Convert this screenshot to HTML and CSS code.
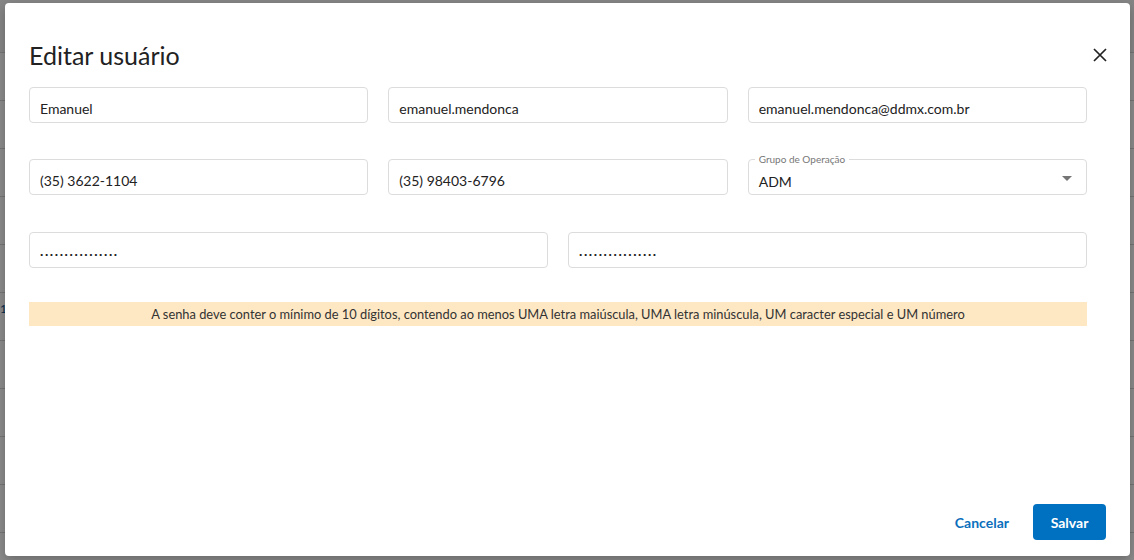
FILE: index.html
```html
<!DOCTYPE html>
<html lang="pt-BR">
<head>
  <meta charset="UTF-8">
  <title>Editar usuário</title>
  <link rel="stylesheet" href="styles.css">
</head>
<body>

  <!-- Página por trás do modal -->
  <div class="page">
    <div class="page-top"></div>
    <div class="row"></div>
    <div class="row"></div>
    <div class="row"></div>
    <div class="row"></div>
    <div class="row"></div>
    <div class="row"><span class="cell-link">1</span></div>
    <div class="row"></div>
    <div class="row"></div>
    <div class="row"></div>
    <div class="row"></div>
    <div class="row"></div>
  </div>

  <div class="overlay"></div>

  <!-- Modal -->
  <div class="modal">
    <div class="modal-header">
      <h2 class="modal-title">Editar usuário</h2>
      <button class="close-button" aria-label="Fechar">
        <svg width="14" height="14" viewBox="0 0 14 14">
          <path d="M1 1 L13 13 M13 1 L1 13" stroke="#222" stroke-width="1.7" fill="none"/>
        </svg>
      </button>
    </div>

    <div class="form">
      <div class="grid grid-3 first">
        <input class="field" type="text" value="Emanuel">
        <input class="field" type="text" value="emanuel.mendonca">
        <input class="field" type="text" value="emanuel.mendonca@ddmx.com.br">
      </div>

      <div class="grid grid-3">
        <input class="field" type="text" value="(35) 3622-1104">
        <input class="field" type="text" value="(35) 98403-6796">
        <div class="select-box">
          <span class="select-label">Grupo de Operação</span>
          <span class="select-value">ADM</span>
          <span class="select-arrow"></span>
        </div>
      </div>

      <div class="grid grid-2">
        <input class="field field-pass" type="text" value="................">
        <input class="field field-pass" type="text" value="................">
      </div>

      <div class="warning">A senha deve conter o mínimo de 10 dígitos, contendo ao menos UMA letra maiúscula, UMA letra minúscula, UM caracter especial e UM número</div>
    </div>

    <div class="modal-footer">
      <button class="btn-text">Cancelar</button>
      <button class="btn-primary">Salvar</button>
    </div>
  </div>

</body>
</html>
```

FILE: styles.css
```css
body {
  font-family: Lato, "Open Sans", sans-serif;
  margin: 0;
  padding: 0;
  width: 1134px;
  height: 560px;
  overflow: hidden;
  background-color: #fff;
  color: #222;
}
.page {
  height: 560px;
}
.page-top {
  height: 53px;
  border-bottom: 1px solid #d6d6d6;
  box-sizing: border-box;
  background-color: #f4f4f4;
}
.row {
  height: 48px;
  border-bottom: 1px solid #d6d6d6;
  box-sizing: border-box;
  position: relative;
}
.cell-link {
  position: absolute;
  left: 0;
  top: 8px;
  color: #0b4c8c;
  font-size: 12px;
}
.overlay {
  position: absolute;
  top: 0;
  left: 0;
  right: 0;
  bottom: 0;
  background-color: rgba(0, 0, 0, 0.45);
}
.modal {
  position: absolute;
  top: 3px;
  left: 5px;
  width: 1125px;
  height: 553px;
  background-color: #fff;
  border-radius: 4px;
  box-sizing: border-box;
  padding: 0 24px 16px 24px;
  display: flex;
  flex-direction: column;
  box-shadow: 0 4px 12px rgba(0, 0, 0, 0.25);
}
.modal-header {
  display: flex;
  justify-content: space-between;
  align-items: center;
  padding-top: 36px;
  height: 32px;
}
.modal-title {
  margin: 0;
  font-size: 25px;
  font-weight: 400;
  line-height: 32px;
  color: #222;
}
.close-button {
  background: none;
  border: none;
  padding: 0;
  margin-right: -2px;
  width: 16px;
  height: 16px;
  display: flex;
  align-items: center;
  justify-content: center;
  cursor: pointer;
}
.form {
  width: 1058px;
  margin-top: 16px;
  flex: 1;
}
.grid {
  display: grid;
  gap: 20px;
  margin-bottom: 37px;
}
.grid.first {
  margin-bottom: 36px;
}
.grid-3 {
  grid-template-columns: repeat(3, 1fr);
}
.grid-2 {
  grid-template-columns: repeat(2, 1fr);
  margin-bottom: 34px;
}
.field {
  display: block;
  width: 100%;
  height: 36px;
  box-sizing: border-box;
  border: 1px solid #dcdcdc;
  border-radius: 4px;
  padding: 6px 10px 0 10px;
  font-family: inherit;
  font-size: 14px;
  color: #222;
  background: #fff;
  outline: none;
}
.field-pass {
  letter-spacing: 1.6px;
  font-weight: 700;
  padding-top: 0;
}
.select-box {
  position: relative;
  height: 36px;
  box-sizing: border-box;
  border: 1px solid #dcdcdc;
  border-radius: 4px;
  padding: 0 10px;
  display: flex;
  align-items: center;
}
.select-label {
  position: absolute;
  top: -7px;
  left: 6px;
  padding: 0 4px;
  background: #fff;
  font-size: 10px;
  line-height: 12px;
  color: #777;
}
.select-value {
  font-size: 14px;
  padding-top: 8px;
  color: #222;
}
.select-arrow {
  position: absolute;
  right: 14px;
  top: 16px;
  width: 0;
  height: 0;
  border-left: 5px solid transparent;
  border-right: 5px solid transparent;
  border-top: 5px solid #757575;
}
.warning {
  background-color: #fee8c4;
  height: 24px;
  line-height: 24px;
  text-align: center;
  font-size: 12.85px;
  color: #333;
}
.modal-footer {
  display: flex;
  justify-content: flex-end;
  align-items: center;
  gap: 16px;
}
.btn-text {
  background: none;
  border: none;
  font-family: inherit;
  font-size: 14px;
  font-weight: 700;
  color: #0b6fbc;
  padding: 8px 8px;
  cursor: pointer;
}
.btn-primary {
  background-color: #0070c0;
  color: #fff;
  border: none;
  border-radius: 4px;
  font-family: inherit;
  font-size: 14px;
  font-weight: 700;
  width: 73px;
  height: 36px;
  cursor: pointer;
}
```
